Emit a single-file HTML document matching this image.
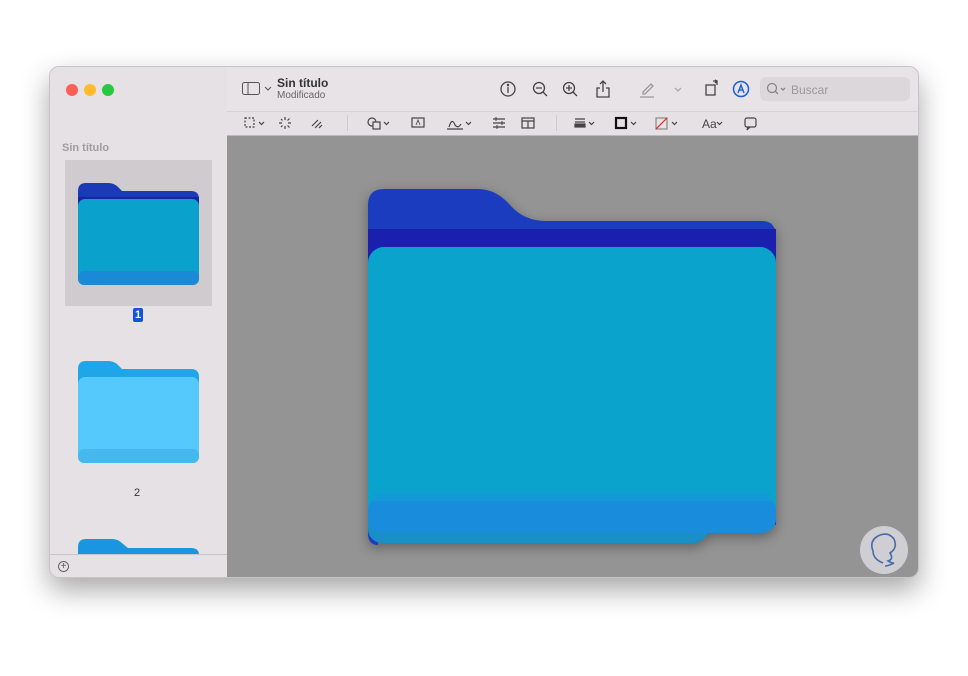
<!DOCTYPE html>
<html><head><meta charset="utf-8"><style>
*{margin:0;padding:0;box-sizing:border-box}
body{width:968px;height:676px;background:#fff;font-family:"Liberation Sans",sans-serif;position:relative;overflow:hidden}
.win{position:absolute;left:49px;top:66px;width:870px;height:512px;border-radius:10px;background:#e6e1e5;box-shadow:0 12px 28px rgba(0,0,0,.35);overflow:hidden;border:1px solid #c9c4c8}
.side{position:absolute;left:0;top:0;width:177px;height:512px;background:#e6e1e5}
.main{position:absolute;left:177px;top:69px;width:693px;height:443px;background:#949494}
.tb2{position:absolute;left:177px;top:44px;width:693px;height:25px;border-top:1px solid #d6d1d5;border-bottom:1px solid #bcb8bb}
.dot{position:absolute;top:17px;width:12px;height:12px;border-radius:50%}
.t{position:absolute;color:#4a4a4a;font-size:11px}
svg{position:absolute}
</style></head><body>
<div class="win">
<div class="side"></div>
<div class="dot" style="left:16px;background:#fd5f57"></div>
<div class="dot" style="left:34px;background:#fdbc2e"></div>
<div class="dot" style="left:52px;background:#28c840"></div>
<div class="t" style="left:12px;top:75px;color:#a09ca0;font-weight:bold;font-size:11px">Sin título</div>
<div style="position:absolute;left:15px;top:93px;width:147px;height:146px;background:#d0cbce"></div>
<svg style="left:28px;top:116px" width="121" height="103" viewBox="0 0 121 103">
<path d="M0 8Q0 0 8 0H30Q36 0 40 4L44 8H113Q121 8 121 16V90H0Z" fill="#1b3ab8"/>
<rect x="0" y="14" width="121" height="10" fill="#1a22a8"/>
<rect x="0" y="16" width="121" height="86" rx="7" fill="#0aa2cc"/>
<rect x="0" y="88" width="121" height="14" rx="6" fill="#1a8ad6"/>
</svg>
<div style="position:absolute;left:83px;top:241px;width:10px;height:14px;background:#1353d8;border-radius:2px;color:#fff;font-size:11px;font-weight:bold;text-align:center;line-height:14px">1</div>
<svg style="left:28px;top:294px" width="121" height="103" viewBox="0 0 121 103">
<path d="M0 8Q0 0 8 0H30Q36 0 40 4L44 8H113Q121 8 121 16V90H0Z" fill="#1fa6e8"/>
<rect x="0" y="16" width="121" height="86" rx="7" fill="#55c9fb"/>
<rect x="0" y="88" width="121" height="14" rx="6" fill="#45b8f0"/>
</svg>
<div class="t" style="left:84px;top:420px;font-size:11px;color:#333">2</div>
<svg style="left:28px;top:472px" width="121" height="16" viewBox="0 0 121 16">
<path d="M0 8Q0 0 8 0H35Q40 0 45 5L50 9H113Q121 9 121 16H0Z" fill="#1a96e0"/>
</svg>
<div style="position:absolute;left:0;top:487px;width:177px;height:1px;background:#c8c4c7"></div>
<div style="position:absolute;left:8px;top:494px;width:11px;height:11px;border:1px solid #666;border-radius:50%;font-size:10px;line-height:9px;text-align:center;color:#555">+</div>
<div style="position:absolute;left:177px;top:0;width:693px;height:44px;background:#e8e3e7"></div>
<div class="tb2"></div>
<svg style="left:192px;top:15px" width="32" height="14"><rect x="0.5" y="0.5" width="17" height="12" rx="2" fill="none" stroke="#555"/><line x1="6" y1="1" x2="6" y2="12" stroke="#555"/><path d="M23 5l3 3 3-3" fill="none" stroke="#555"/></svg>
<div class="t" style="left:227px;top:9px;font-weight:bold;font-size:12px;color:#333">Sin título</div>
<div class="t" style="left:227px;top:23px;font-size:10px;color:#666">Modificado</div>
<svg style="left:450px;top:13px" width="200" height="18" stroke="#444" fill="none" stroke-width="1.3">
<circle cx="8" cy="9" r="7"/><line x1="8" y1="7" x2="8" y2="13"/><circle cx="8" cy="5" r=".6"/>
<circle cx="39" cy="8" r="5.5"/><line x1="43" y1="12" x2="47" y2="16"/><line x1="36" y1="8" x2="42" y2="8"/>
<circle cx="69" cy="8" r="5.5"/><line x1="73" y1="12" x2="77" y2="16"/><line x1="66" y1="8" x2="72" y2="8"/><line x1="69" y1="5" x2="69" y2="11"/>
<path d="M100 8h-3v9h12V8h-3M103 12V1M100 4l3-3 3 3"/>
<path d="M143 12l8-8 2 2-8 8h-2zM140 17h14" stroke="#999"/>
<path d="M175 8l3 3 3-3" stroke="#aaa"/>
</svg>
<svg style="left:654px;top:12px" width="20" height="20" stroke="#444" fill="none" stroke-width="1.3"><rect x="2" y="6" width="9" height="10"/><path d="M9 2h4v4M11 1l2 1-2 2"/></svg>
<svg style="left:682px;top:13px" width="18" height="18"><circle cx="9" cy="9" r="7.5" fill="none" stroke="#1a5ce0" stroke-width="1.5"/><path d="M6 13l3-8 3 8M7 10h4" fill="none" stroke="#1a5ce0" stroke-width="1.4"/></svg>
<div style="position:absolute;left:710px;top:10px;width:150px;height:24px;border-radius:6px;background:#dcd7db"></div>
<svg style="left:716px;top:15px" width="24" height="14" fill="none" stroke="#888" stroke-width="1.3"><circle cx="6" cy="6" r="4.5"/><line x1="9" y1="9" x2="12" y2="12"/><path d="M15 6l2 2 2-2"/></svg>
<div class="t" style="left:741px;top:16px;color:#999;font-size:12px">Buscar</div>
<svg style="left:190px;top:49px" width="680" height="16" fill="none" stroke="#444" stroke-width="1.2">
<rect x="5" y="2" width="9" height="9" stroke-dasharray="2 1.5"/><path d="M19 6l2.5 2.5 2.5-2.5"/>
<path d="M45 1v3M45 10v3M39 7h3M48 7h3M41 3l1.5 1.5M47.5 9.5l2 2M41 11l1.5-1.5M47.5 4.5l2-2"/>
<path d="M72 10l6-6M75 12l6-6M79 12l3-3"/>
<circle cx="132" cy="6" r="4"/><rect x="133" y="6" width="7" height="7" fill="#e6e1e5"/><path d="M144 6l2.5 2.5 2.5-2.5"/>
<rect x="172" y="2" width="12" height="9"/><path d="M176 9l2-5 2 5" stroke-width=".8"/>
<path d="M209 11q3-10 6-2 3 4 6-1M207 13h16"/><path d="M226 6l2.5 2.5 2.5-2.5"/>
<path d="M253 3h12M253 7h12M253 11h12"/><path d="M256 1v4M262 5v4M257 9v4" stroke-width="1"/>
<rect x="282" y="2" width="12" height="10"/><path d="M282 5h12M288 5v7"/>
<path d="M335 3h10M335 6h10" stroke-width="1.3"/><rect x="335" y="8" width="10" height="3" fill="#444"/><path d="M349 6l2.5 2.5 2.5-2.5"/>
<rect x="376" y="2" width="10" height="10" stroke="#111" stroke-width="2.2"/><path d="M391 6l2.5 2.5 2.5-2.5"/>
<rect x="416" y="2" width="11" height="11" stroke="#888"/><path d="M416 13l11-11" stroke="#e22"/><path d="M432 6l2.5 2.5 2.5-2.5"/>
<path d="M477 6l2.5 2.5 2.5-2.5"/>
<rect x="505" y="2" width="11" height="9" rx="2"/><path d="M508 11l-1 3 3-3"/>
</svg>
<div class="t" style="left:652px;top:50px;font-size:12px;color:#444">Aa</div>
<div style="position:absolute;left:297px;top:48px;width:1px;height:16px;background:#ccc"></div>
<div style="position:absolute;left:506px;top:48px;width:1px;height:16px;background:#ccc"></div>
<div class="main"></div>
<svg style="left:318px;top:118px;filter:drop-shadow(0 4px 6px rgba(0,0,0,.35))" width="420" height="362" viewBox="0 0 420 362">
<path d="M10 360q-10 0-10-12V20Q0 4 16 4H110Q128 4 142 20Q156 36 178 36H394Q408 36 408 52V340H340L330 356H10Z" fill="#1c3cc0"/>
<rect x="0" y="44" width="408" height="30" fill="#1a1fae"/>
<rect x="0" y="300" width="340" height="58" rx="14" fill="#1a8ec6"/>
<rect x="0" y="62" width="408" height="286" rx="16" fill="#0aa3cc"/>
<rect x="0" y="312" width="408" height="36" rx="14" fill="#1a8cdc"/>
<rect x="6" y="308" width="396" height="8" fill="#129ad6"/>
</svg>
<svg style="left:809px;top:458px" width="50" height="50"><circle cx="25" cy="25" r="24" fill="#cfcfd3"/><path d="M24 38q-10-4-10-12-4-10 5-15 10-5 16 3 4 9-4 14 4 6-2 8 3 2 6 2-6 3-9 3" fill="none" stroke="#4a6aa8" stroke-width="1.6"/></svg>
</div>
</body></html>
